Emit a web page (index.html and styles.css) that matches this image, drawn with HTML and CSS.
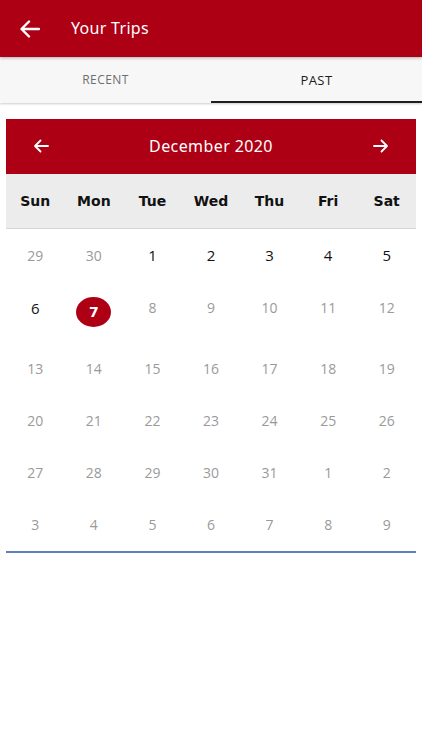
FILE: index.html
```html
<!DOCTYPE html>
<html>
<head>
	<title>Your Trips</title>
	<link rel="stylesheet" href="styles.css">
</head>
<body>
	<div class="appbar">
		<svg class="back" width="20" height="18" viewBox="0 0 20 18"><path d="M19 9H2M9 1.5L1.5 9 9 16.5" fill="none" stroke="#fff" stroke-width="2.4" stroke-linecap="round" stroke-linejoin="round"/></svg>
		<span class="title">Your Trips</span>
	</div>

	<div class="tabs">
		<div class="tab">RECENT</div>
		<div class="tab active">PAST</div>
	</div>

	<div class="calendar">
		<div class="cal_head">
			<svg width="16" height="14" viewBox="0 0 16 14"><path d="M15 7H2M7.5 1.5L2 7l5.5 5.5" fill="none" stroke="#fff" stroke-width="1.8" stroke-linecap="round" stroke-linejoin="round"/></svg>
			<span class="month">December 2020</span>
			<svg width="16" height="14" viewBox="0 0 16 14"><path d="M1 7h13M8.5 1.5L14 7l-5.5 5.5" fill="none" stroke="#fff" stroke-width="1.8" stroke-linecap="round" stroke-linejoin="round"/></svg>
		</div>
		<div class="weekdays">
			<span>Sun</span><span>Mon</span><span>Tue</span><span>Wed</span><span>Thu</span><span>Fri</span><span>Sat</span>
		</div>
		<div class="days">
			<div class="week r1"><span class="off">29</span><span class="off">30</span><span>1</span><span>2</span><span>3</span><span>4</span><span>5</span></div>
			<div class="week r2"><span>6</span><span class="sel"><b>7</b></span><span class="off">8</span><span class="off">9</span><span class="off">10</span><span class="off">11</span><span class="off">12</span></div>
			<div class="week"><span class="off">13</span><span class="off">14</span><span class="off">15</span><span class="off">16</span><span class="off">17</span><span class="off">18</span><span class="off">19</span></div>
			<div class="week"><span class="off">20</span><span class="off">21</span><span class="off">22</span><span class="off">23</span><span class="off">24</span><span class="off">25</span><span class="off">26</span></div>
			<div class="week"><span class="off">27</span><span class="off">28</span><span class="off">29</span><span class="off">30</span><span class="off">31</span><span class="off">1</span><span class="off">2</span></div>
			<div class="week r6"><span class="off">3</span><span class="off">4</span><span class="off">5</span><span class="off">6</span><span class="off">7</span><span class="off">8</span><span class="off">9</span></div>
		</div>
	</div>
</body>
</html>
```

FILE: styles.css
```css
/* Page */

html, body { margin: 0; padding: 0; background: #fff; }
body { font-family: "Open Sans", "Noto Sans", sans-serif; width: 422px; height: 750px; overflow: hidden; }

/* App bar */

.appbar { height: 57px; background: #ae0015; display: flex; align-items: center; position: relative; z-index: 2; box-shadow: 0 1px 3px rgba(0,0,0,0.3); }
.back { margin-left: 20px; }
.title { margin-left: 31px; color: #fff; font-size: 16px; font-family: "Noto Sans", sans-serif; letter-spacing: 0.3px; padding-bottom: 1px; }

/* Tabs */

.tabs { display: flex; height: 46px; background: #f7f7f7; box-shadow: 0 1px 2px rgba(0,0,0,0.2); }
.tab { flex: 1; display: flex; align-items: center; justify-content: center; font-size: 12px; color: #6e6e6e; letter-spacing: 0.4px; box-sizing: border-box; border-bottom: 2px solid transparent; padding-top: 1px; }
.tab.active { color: #1c1c1c; font-size: 13px; border-bottom-color: #1f1f1f; }

/* Calendar */

.calendar { margin: 16px 6px 0 6px; border-bottom: 2px solid #5d80bf; }
.cal_head { height: 53px; background: #ae0015; display: flex; align-items: center; justify-content: space-between; padding: 0 27px 2px 27px; }
.month { color: #fff; font-size: 16px; font-family: "Noto Sans", sans-serif; letter-spacing: 0.4px; }
.weekdays { display: grid; grid-template-columns: repeat(7, 1fr); height: 54px; align-items: center; background: #ececec; border-bottom: 1px solid #d6d6d6; }
.weekdays span { text-align: center; font-family: "DejaVu Sans", sans-serif; font-weight: bold; font-size: 14px; color: #111; padding-bottom: 1px; }
.week { display: grid; grid-template-columns: repeat(7, 1fr); height: 52px; align-items: center; }
.week.r2 { height: 61px; align-items: start; }
.week.r2 span { padding-top: 17px; }
.week.r6 { height: 53px; }
.week span { text-align: center; font-size: 15px; color: #111; }
.week span.off { color: #9a9a9a; font-size: 14px; }
.week span.sel { display: flex; justify-content: center; padding-top: 16px; }
.sel b { width: 35px; height: 30px; border-radius: 50%; background: #ae0015; color: #fff; display: flex; align-items: center; justify-content: center; font-family: "DejaVu Sans", sans-serif; font-size: 14px; }
```
